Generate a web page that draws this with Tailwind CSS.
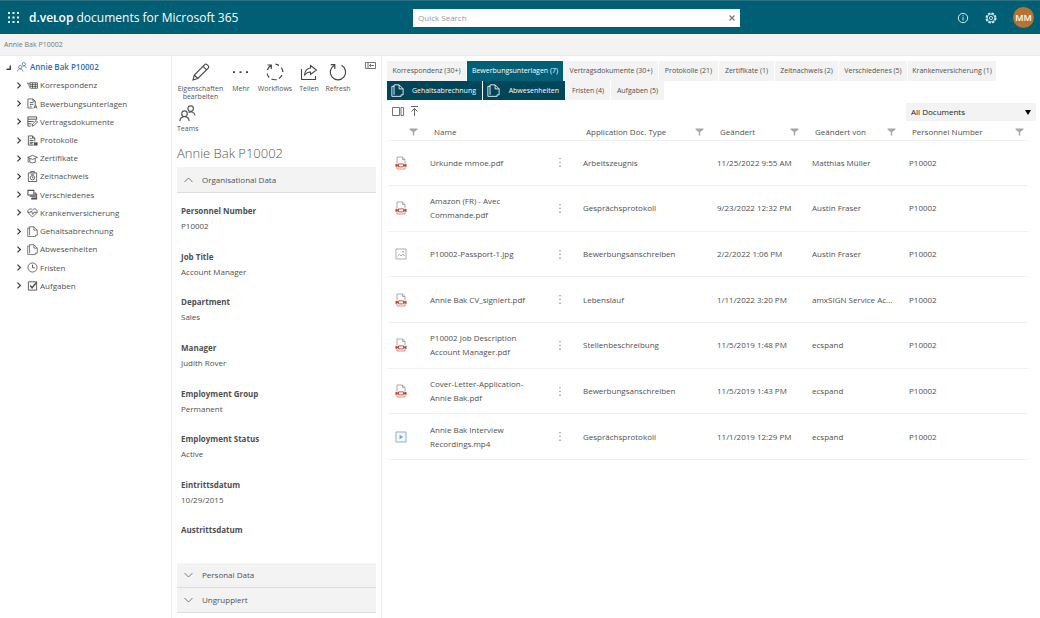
<!DOCTYPE html>
<html lang="de">
<head>
<meta charset="utf-8">
<title>d.velop documents for Microsoft 365</title>
<script src="https://cdn.jsdelivr.net/npm/@tailwindcss/browser@4"></script>
</head>
<body class="flex min-h-screen flex-col bg-white font-['Open_Sans','Noto_Sans',sans-serif] text-[8px] leading-[12px] text-[#505050]">

<svg class="hidden" aria-hidden="true">
  <defs>
    <symbol id="chev" viewBox="0 0 6 8"><path d="M1.2 .8 4.6 4 1.2 7.2" fill="none" stroke="#333" stroke-width="1.3"/></symbol>
    <symbol id="people" viewBox="0 0 16 16"><g fill="none" stroke="currentColor" stroke-width="1.1"><circle cx="11" cy="3.400" r="2.600"/><path d="M9 7C10.500 6 14 6 15.200 9.800"/><circle cx="5.200" cy="8.200" r="2.600"/><path d="M.8 15.200c.3-2.700 2-4.300 4.400-4.300s4.100 1.600 4.400 4.300"/></g></symbol>
    <symbol id="mail" viewBox="0 0 12 12"><path d="M0 3.500h3M1 5.500h2M2 7.500h1" stroke="currentColor"/><path d="M3.500 3h8v6h-8zM4 5h7M4 7h7M6 3v6M9 3v6" fill="none" stroke="currentColor" stroke-width=".9"/></symbol>
    <symbol id="docA" viewBox="0 0 12 12"><g fill="none" stroke="currentColor" stroke-width=".9"><path d="M6 11H1V1h5.500L9 3.500V7M6.500 1v2.500H9M3 5h4M3 7h4M3 9h2"/><path d="m7.500 11.500 1.700-4.300 1.700 4.300M8 10h2.500"/></g></symbol>
    <symbol id="contract" viewBox="0 0 12 12"><g fill="none" stroke="currentColor"><path d="M10.500 4V1H1v10h3M1 3.500h9.500M1 6h6M1 8.500h4"/><path d="m5.500 11 .6-2.200L10 5l1.500 1.500-3.900 3.900z"/></g></symbol>
    <symbol id="proto" viewBox="0 0 12 12"><path d="M1.500 11V1H6l2.500 2.500V7M6 1v2.500h2.500M1.500 11H7M3 4h2M3 6h4M3 8h4M3 9.500h3" fill="none" stroke="currentColor"/><path d="M7.500 8h4v3.500h-4z" fill="currentColor"/></symbol>
    <symbol id="cap" viewBox="0 0 12 12"><path d="M.8 4.800 6 2.600l5.400 2.200L6 7zM3 6v4c1.500 1 4.500 1 6 0V6M1.300 5v5.500" fill="none" stroke="currentColor" stroke-width=".9"/></symbol>
    <symbol id="badge" viewBox="0 0 12 12"><g fill="none" stroke="currentColor" stroke-width=".9"><path d="M1.500 2h9v9.500h-9zM4 2V.5h4V2M4 3.500h4"/><circle cx="6" cy="7.300" r="2.400"/><path d="M6 6v1.500h1.200"/></g></symbol>
    <symbol id="stack" viewBox="0 0 12 12"><path d="M1 1.500h6.500v5H1zM9 3.500v4.500H3M10.500 5v5.500H4.500" fill="none" stroke="currentColor" stroke-width="1.100"/><path d="M5 9h6v2.500H5z" fill="currentColor" fill-opacity=".7"/></symbol>
    <symbol id="heart" viewBox="0 0 12 12"><path d="M6 11 1.400 6.400C-.5 3.500 3.500.3 6 3.200 8.500.3 12.500 3.500 10.600 6.400zM.8 5.800h3l1-1.500L6.300 8l1.200-2.200h3.700" fill="none" stroke="currentColor" stroke-width=".9"/></symbol>
    <symbol id="pages" viewBox="0 0 12 12"><path d="M2.800 10V.8h4.700l3.700 3.700V10H9.300M7.500.8v3.700h3.700M2.800 2.200H.8v9.200h8.500V10" fill="none" stroke="currentColor" stroke-width=".8"/></symbol>
    <symbol id="clock" viewBox="0 0 12 12"><circle cx="6" cy="6" r="5" fill="none" stroke="currentColor" stroke-width=".9"/><path d="M6 3v3.300h2.500" fill="none" stroke="currentColor"/></symbol>
    <symbol id="check" viewBox="0 0 12 12"><path d="M1.500 2h9v9h-9z" fill="none" stroke="currentColor"/><path d="m3.500 6 2 2.500L10.500 2.500" fill="none" stroke="currentColor" stroke-width="1.500"/></symbol>
    <symbol id="funnel" viewBox="0 0 10 9"><path d="M.5.5h9v1.200L5.800 4.500V8.500H4.200v-4L.5 1.700z" fill="#a6a6a6"/></symbol>
    <symbol id="dots" viewBox="0 0 2 9"><path d="M.5 0h1v1.300h-1zM.5 3.800h1v1.300h-1zM.5 7.600h1v1.300h-1z" fill="#707070"/></symbol>
    <symbol id="pdf" viewBox="0 0 12 14"><path d="M2 7.500V1h5.500L10 3.500v4M7.500 1v2.500H10" fill="none" stroke="#a0a0a0" stroke-width=".9"/><path d="M2 11v2h8v-2" fill="none" stroke="#c98a7c" stroke-width=".9"/><path d="M.5 7.700 3 8.500v1.700L.5 11zM11.500 7.700 9 8.500v1.700l2.500.8z" fill="#b5472f"/><path d="M3.500 7.900h5v3h-5z" fill="#fff" stroke="#c4553f"/></symbol>
    <symbol id="img" viewBox="0 0 12 12"><path d="M1 1h10v10H1zM2.500 8.500l2-2 1.500 1.500L8 6l1.700 2" fill="none" stroke="#a3a8a3" stroke-width=".9"/><circle cx="8" cy="3.800" r=".9" fill="#a3a8a3"/></symbol>
    <symbol id="video" viewBox="0 0 12 12"><path d="M1 1h10v10H1z" fill="#f6fbff" stroke="#8ba3b5" stroke-width=".9"/><path d="M4.500 3.700 8.300 6 4.500 8.300z" fill="#6fa8d8"/></symbol>
    <symbol id="up" viewBox="0 0 14 8"><path d="m2.500 6 4-4 4 4" fill="none" stroke="#777"/></symbol>
    <symbol id="down" viewBox="0 0 14 8"><path d="m2.500 2 4 4 4-4" fill="none" stroke="#777"/></symbol>
  </defs>
</svg>

<header class="flex h-[34px] items-center border-t border-[#2f7284] bg-[#005e75] text-white">
  <div class="flex flex-[413_1_0%] items-center">
    <button aria-label="Apps" class="ml-2 mr-[10px]">
      <svg class="size-[11px]" viewBox="0 0 11 11" fill="#fff"><path d="M0 0h2v2H0zM4.500 0h2v2h-2zM9 0h2v2H9zM0 4.500h2v2H0zM4.500 4.500h2v2h-2zM9 4.500h2v2H9zM0 9h2v2H0zM4.500 9h2v2h-2zM9 9h2v2H9z"/></svg>
    </button>
    <h1 class="whitespace-nowrap text-[12px] leading-4"><span class="font-semibold">d.veʟop</span> documents for Microsoft 365</h1>
  </div>
  <form class="flex h-[18px] w-[327px] items-center bg-white px-[5px]">
    <input type="text" aria-label="Quick Search" placeholder="Quick Search" class="min-w-0 flex-1 text-[8px] text-[#505050] outline-none placeholder:text-[#999]">
    <button type="button" aria-label="Clear"><svg class="size-[6px]" viewBox="0 0 6 6"><path d="m.5.500 5 5m0-5-5 5" stroke="#777" stroke-width="1.200"/></svg></button>
  </form>
  <div class="flex flex-[300_1_0%] justify-end">
    <div class="flex items-center gap-4 pr-[6px]">
      <button aria-label="Info"><svg class="size-3" viewBox="0 0 12 12" fill="none" stroke="#d5edf2"><circle cx="6" cy="6" r="4.700"/><path d="M6 5.300v3.200M6 3.300v1.100"/></svg></button>
      <button aria-label="Settings"><svg class="size-3" viewBox="0 0 13 13" fill="none" stroke="#d5edf2"><circle cx="6.500" cy="6.500" r="5.200" stroke-width="1.500" stroke-dasharray="2.700 1.380"/><circle cx="6.500" cy="6.500" r="4.200"/><circle cx="6.500" cy="6.500" r="1.700"/></svg></button>
      <button class="size-[21px] rounded-full bg-[#b87333] text-[9px] font-semibold text-white">MM</button>
    </div>
  </div>
</header>

<nav class="flex h-[22px] items-center border-b border-[#ececec] bg-[#f3f3f3] px-1 text-[7px] text-[#777]" aria-label="Breadcrumb"><a href="#">Annie Bak P10002</a></nav>

<div class="flex flex-1 items-stretch">
  <nav class="w-[172px] shrink-0 border-r border-[#ececec] pt-[2px]" aria-label="Akte">
    <ul class="grid min-h-[237px] auto-rows-fr text-[8px]">
      <li class="flex items-center pl-[6px] text-[#2a6db5]"><svg class="mr-[6px] size-[5px]" viewBox="0 0 5 5"><path d="M5 0v5H0l1-1.500h2.500V1z" fill="#444"/></svg><svg class="mr-[3px] size-[10px]"><use href="#people"/></svg><a href="#" class="font-semibold">Annie Bak P10002</a></li>
      <li class="flex items-center pl-4"><svg class="mr-[5px] h-[7px] w-[6px]"><use href="#chev"/></svg><svg class="mr-[2px] size-[11px]"><use href="#mail"/></svg><a href="#">Korrespondenz</a></li>
      <li class="flex items-center pl-4"><svg class="mr-[5px] h-[7px] w-[6px]"><use href="#chev"/></svg><svg class="mr-[2px] size-[11px]"><use href="#docA"/></svg><a href="#">Bewerbungsunterlagen</a></li>
      <li class="flex items-center pl-4"><svg class="mr-[5px] h-[7px] w-[6px]"><use href="#chev"/></svg><svg class="mr-[2px] size-[11px]"><use href="#contract"/></svg><a href="#">Vertragsdokumente</a></li>
      <li class="flex items-center pl-4"><svg class="mr-[5px] h-[7px] w-[6px]"><use href="#chev"/></svg><svg class="mr-[2px] size-[11px]"><use href="#proto"/></svg><a href="#">Protokolle</a></li>
      <li class="flex items-center pl-4"><svg class="mr-[5px] h-[7px] w-[6px]"><use href="#chev"/></svg><svg class="mr-[2px] size-[11px]"><use href="#cap"/></svg><a href="#">Zertifikate</a></li>
      <li class="flex items-center pl-4"><svg class="mr-[5px] h-[7px] w-[6px]"><use href="#chev"/></svg><svg class="mr-[2px] size-[11px]"><use href="#badge"/></svg><a href="#">Zeitnachweis</a></li>
      <li class="flex items-center pl-4"><svg class="mr-[5px] h-[7px] w-[6px]"><use href="#chev"/></svg><svg class="mr-[2px] size-[11px]"><use href="#stack"/></svg><a href="#">Verschiedenes</a></li>
      <li class="flex items-center pl-4"><svg class="mr-[5px] h-[7px] w-[6px]"><use href="#chev"/></svg><svg class="mr-[2px] size-[11px]"><use href="#heart"/></svg><a href="#">Krankenversicherung</a></li>
      <li class="flex items-center pl-4"><svg class="mr-[5px] h-[7px] w-[6px]"><use href="#chev"/></svg><svg class="mr-[2px] size-[11px]"><use href="#pages"/></svg><a href="#">Gehaltsabrechnung</a></li>
      <li class="flex items-center pl-4"><svg class="mr-[5px] h-[7px] w-[6px]"><use href="#chev"/></svg><svg class="mr-[2px] size-[11px]"><use href="#pages"/></svg><a href="#">Abwesenheiten</a></li>
      <li class="flex items-center pl-4"><svg class="mr-[5px] h-[7px] w-[6px]"><use href="#chev"/></svg><svg class="mr-[2px] size-[11px]"><use href="#clock"/></svg><a href="#">Fristen</a></li>
      <li class="flex items-center pl-4"><svg class="mr-[5px] h-[7px] w-[6px]"><use href="#chev"/></svg><svg class="mr-[2px] size-[11px]"><use href="#check"/></svg><a href="#">Aufgaben</a></li>
    </ul>
  </nav>

  <section class="w-[210px] shrink-0 border-r border-[#ececec] pl-[5px] pr-[5px] pt-[6px]">
    <div class="flex items-start justify-between">
      <div class="flex items-start gap-[8px] text-[7px] leading-[8px] text-[#555]">
        <button class="flex w-[47px] flex-col items-center gap-[3px]">
          <svg class="size-5" viewBox="0 0 20 20" fill="none" stroke="#444" stroke-width="1.100"><path d="m2 18 1.300-5L14 2.300c1-1 4.700 2.300 3.500 3.500L6.800 16.500zM3.300 13l3.500 3.500M12 4.300l3.600 3.500"/></svg>
          <span>Eigenschaften bearbeiten</span></button>
        <button class="flex w-[18px] flex-col items-center gap-[3px]">
          <svg class="size-5" viewBox="0 0 20 20" fill="#444"><path d="M2 9.300h2v1.700H2zM8.500 9.300h2v1.700h-2zM15 9.300h2v1.700h-2z"/></svg>
          <span>Mehr</span></button>
        <button class="flex w-[34px] flex-col items-center gap-[3px]">
          <svg class="size-5" viewBox="0 0 20 20" fill="none" stroke="#444" stroke-width="1.200"><path d="M6 3.200A8 8 0 0 0 2.500 8M2.200 11.500a8 8 0 0 0 2 4M6.500 17a8 8 0 0 0 5 .6M14 16.500a8 8 0 0 0 3-3.500M17.800 10a8 8 0 0 0-1.500-4.500M14 3.500A8 8 0 0 0 10.500 2.200M2.500 3H6.300V7"/></svg>
          <span>Workflows</span></button>
        <button class="flex w-[18px] flex-col items-center gap-[3px]">
          <svg class="size-5" viewBox="0 0 20 20" fill="none" stroke="#444" stroke-width="1.100"><path d="M2.500 7v10.500h14V14M11.500 3.500 17.500 8l-6 4.500V10C8.500 10 7 11 5.500 13.500 5.800 9 8 6.300 11.500 6z"/></svg>
          <span>Teilen</span></button>
        <button class="flex w-[24px] flex-col items-center gap-[3px]">
          <svg class="size-5" viewBox="0 0 20 20" fill="none" stroke="#444" stroke-width="1.200"><path d="M13.500 3.300A7.700 7.700 0 1 1 6 3.500M2.800 2.700h4V7"/></svg>
          <span>Refresh</span></button>
      </div>
      <button aria-label="Collapse panel"><svg class="h-[7px] w-[11px]" viewBox="0 0 11 7" fill="none" stroke="#666" stroke-width=".9"><path d="M.5.500h10v6H.5zM3 .5v6M9 3.500H4.500M6 2 4.500 3.500 6 5"/></svg></button>
    </div>
    <button class="mt-1 flex flex-col items-start gap-[3px] text-[7px] leading-[8px] text-[#555]">
      <svg class="ml-[2px] size-[17px]"><use href="#people"/></svg>
      <span>Teams</span></button>
    <h2 class="mt-3 text-[13px] font-light leading-4 text-[#555]">Annie Bak P10002</h2>
    <button class="mt-[6px] flex h-[26px] w-full items-center border-b border-[#ddd] bg-[#f3f3f3] pl-[5px]"><svg class="mr-[6px] h-2 w-[14px]"><use href="#up"/></svg>Organisational Data</button>
    <dl class="mt-[10px] grid min-h-[365px] auto-rows-fr pl-1 [&_dd]:leading-[14px] [&_dt]:font-bold [&_dt]:leading-4">
      <div><dt>Personnel Number</dt><dd>P10002</dd></div>
      <div><dt>Job Title</dt><dd>Account Manager</dd></div>
      <div><dt>Department</dt><dd>Sales</dd></div>
      <div><dt>Manager</dt><dd>Judith Rover</dd></div>
      <div><dt>Employment Group</dt><dd>Permanent</dd></div>
      <div><dt>Employment Status</dt><dd>Active</dd></div>
      <div><dt>Eintrittsdatum</dt><dd>10/29/2015</dd></div>
      <div><dt>Austrittsdatum</dt><dd></dd></div>
    </dl>
    <div class="-mt-[5px] [&>button]:flex [&>button]:h-[25px] [&>button]:w-full [&>button]:items-center [&>button]:border-b [&>button]:border-[#ddd] [&>button]:bg-[#f3f3f3] [&>button]:pl-[5px]">
      <button><svg class="mr-[6px] h-2 w-[14px]"><use href="#down"/></svg>Personal Data</button>
      <button><svg class="mr-[6px] h-2 w-[14px]"><use href="#down"/></svg>Ungruppiert</button>
    </div>
  </section>

  <main class="min-w-0 flex-1 pl-[5px] pr-1 pt-[5px]">
    <div class="flex gap-px text-[7px] leading-[20px] [&>button]:whitespace-nowrap [&>button]:bg-[#f3f3f3]">
      <button class="w-[79px]">Korrespondenz (30+)</button>
      <button class="w-[96px] bg-[#005e75]! text-white">Bewerbungsunterlagen (7)</button>
      <button class="w-[94px]">Vertragsdokumente (30+)</button>
      <button class="w-[59px]">Protokolle (21)</button>
      <button class="w-[55px]">Zertifikate (1)</button>
      <button class="w-[63px]">Zeitnachweis (2)</button>
      <button class="w-[68px]">Verschiedenes (5)</button>
      <button class="w-[88px]">Krankenversicherung (1)</button>
    </div>
    <div class="flex gap-px text-[7px] leading-[19px] [&>button]:whitespace-nowrap [&>button]:bg-[#f3f3f3]">
      <button class="flex w-[95px] items-center justify-between bg-[#004558]! pl-[4px] pr-[6px] text-white"><svg class="size-[13px]"><use href="#pages"/></svg>Gehaltsabrechnung</button>
      <button class="flex w-[82px] items-center justify-between bg-[#004558]! pl-[4px] pr-[6px] text-white"><svg class="size-[13px]"><use href="#pages"/></svg>Abwesenheiten</button>
      <button class="w-[44px]">Fristen (4)</button>
      <button class="w-[53px]">Aufgaben (5)</button>
    </div>
    <div class="flex items-start justify-between pt-[3px]">
      <div class="flex items-center gap-[6px] pl-[5px] pt-[3px]">
        <button aria-label="Preview"><svg class="h-[9px] w-3" viewBox="0 0 12 9" fill="none" stroke="#666" stroke-width=".9"><path d="M.5.500h7v8h-7zM9 .5h2.500v8H9z"/></svg></button>
        <button aria-label="Upload"><svg class="h-[10px] w-[9px]" viewBox="0 0 9 10" fill="none" stroke="#666"><path d="M1 .5h7M4.500 10V2.500M1.500 5.500l3-3 3 3"/></svg></button>
      </div>
      <div class="relative w-[130px]">
        <select aria-label="View" class="block h-[18px] w-full appearance-none bg-[#f3f3f3] pl-[5px] text-[8px] text-[#222]"><option>All Documents</option></select>
        <svg class="pointer-events-none absolute right-[5px] top-[7px] h-[5px] w-[6px]" viewBox="0 0 6 5"><path d="M0 0h6L3 5z" fill="#000"/></svg>
      </div>
    </div>
    <div class="pr-[7px]">
    <table class="h-[339px] w-full table-fixed border-collapse text-left [&_td]:pl-2 [&_tr]:border-b [&_tr]:border-[#f1f1f1]">
      <colgroup><col class="w-[35px]"><col class="w-[125px]"><col class="w-[28px]"><col class="w-[134px]"><col class="w-[95px]"><col class="w-[97px]"><col></colgroup>
      <thead>
        <tr class="h-[19px] [&>th]:pt-[3px] [&>th]:font-normal">
          <th class="pr-1"><svg class="ml-auto h-2 w-[9px]" role="img" aria-label="Filter"><use href="#funnel"/></svg></th>
          <th class="pl-3">Name</th>
          <th></th>
          <th class="pl-[11px]"><div class="flex items-center justify-between pr-[5px]">Application Doc. Type<svg class="h-2 w-[9px]"><use href="#funnel"/></svg></div></th>
          <th class="pl-[11px]"><div class="flex items-center justify-between pr-[5px]">Geändert<svg class="h-2 w-[9px]"><use href="#funnel"/></svg></div></th>
          <th class="pl-[11px]"><div class="flex items-center justify-between pr-[5px]">Geändert von<svg class="h-2 w-[9px]"><use href="#funnel"/></svg></div></th>
          <th class="pl-[11px]"><div class="flex items-center justify-between pr-[5px]">Personnel Number<svg class="h-2 w-[9px]"><use href="#funnel"/></svg></div></th>
        </tr>
      </thead>
      <tbody class="[&>tr]:h-[45px] [&>tr>td:nth-child(2)]:leading-[14px] [&>tr>td]:whitespace-nowrap [&>tr>td:nth-child(2)]:whitespace-normal">
        <tr><td><svg class="h-[14px] w-3"><use href="#pdf"/></svg></td><td class="pr-4">Urkunde mmoe.pdf</td><td><button aria-label="Menu" class="block pl-1"><svg class="h-[9px] w-[2px]"><use href="#dots"/></svg></button></td><td>Arbeitszeugnis</td><td>11/25/2022 9:55 AM</td><td>Matthias Müller</td><td>P10002</td></tr>
        <tr><td><svg class="h-[14px] w-3"><use href="#pdf"/></svg></td><td class="pr-4">Amazon (FR) - Avec Commande.pdf</td><td><button aria-label="Menu" class="block pl-1"><svg class="h-[9px] w-[2px]"><use href="#dots"/></svg></button></td><td>Gesprächsprotokoll</td><td>9/23/2022 12:32 PM</td><td>Austin Fraser</td><td>P10002</td></tr>
        <tr><td><svg class="size-3"><use href="#img"/></svg></td><td class="pr-4">P10002-Passport-1.jpg</td><td><button aria-label="Menu" class="block pl-1"><svg class="h-[9px] w-[2px]"><use href="#dots"/></svg></button></td><td>Bewerbungsanschreiben</td><td>2/2/2022 1:06 PM</td><td>Austin Fraser</td><td>P10002</td></tr>
        <tr><td><svg class="h-[14px] w-3"><use href="#pdf"/></svg></td><td class="pr-4">Annie Bak CV_signiert.pdf</td><td><button aria-label="Menu" class="block pl-1"><svg class="h-[9px] w-[2px]"><use href="#dots"/></svg></button></td><td>Lebenslauf</td><td>1/11/2022 3:20 PM</td><td>amxSIGN Service Ac...</td><td>P10002</td></tr>
        <tr><td><svg class="h-[14px] w-3"><use href="#pdf"/></svg></td><td class="pr-4">P10002 Job Description Account Manager.pdf</td><td><button aria-label="Menu" class="block pl-1"><svg class="h-[9px] w-[2px]"><use href="#dots"/></svg></button></td><td>Stellenbeschreibung</td><td>11/5/2019 1:48 PM</td><td>ecspand</td><td>P10002</td></tr>
        <tr><td><svg class="h-[14px] w-3"><use href="#pdf"/></svg></td><td class="pr-4">Cover-Letter-Application-Annie Bak.pdf</td><td><button aria-label="Menu" class="block pl-1"><svg class="h-[9px] w-[2px]"><use href="#dots"/></svg></button></td><td>Bewerbungsanschreiben</td><td>11/5/2019 1:43 PM</td><td>ecspand</td><td>P10002</td></tr>
        <tr><td><svg class="size-3"><use href="#video"/></svg></td><td class="pr-4">Annie Bak Interview Recordings.mp4</td><td><button aria-label="Menu" class="block pl-1"><svg class="h-[9px] w-[2px]"><use href="#dots"/></svg></button></td><td>Gesprächsprotokoll</td><td>11/1/2019 12:29 PM</td><td>ecspand</td><td>P10002</td></tr>
      </tbody>
    </table>
    </div>
  </main>
</div>
</body>
</html>
